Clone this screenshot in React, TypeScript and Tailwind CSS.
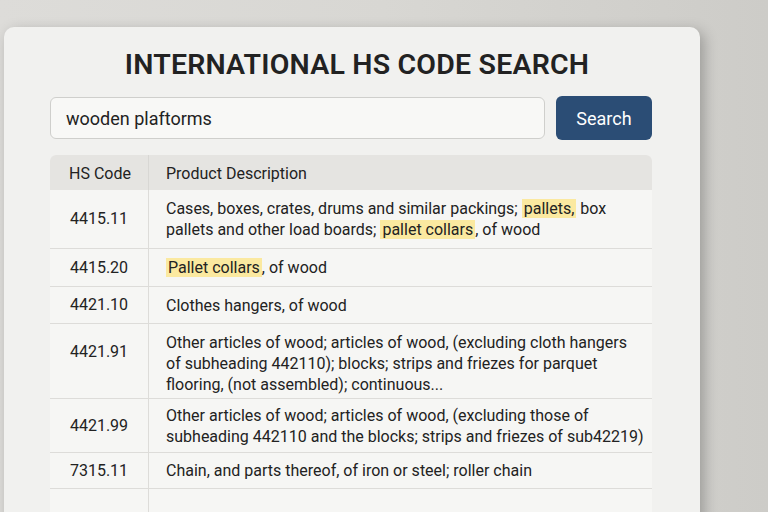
import type { ReactNode } from 'react';

type Row = { code: string; lines: ReactNode[]; h: string; codeClass?: string; descClass?: string };

function Mark({ children }: { children: ReactNode }) {
  return <span className="bg-[#fbe9a0] px-[2px]">{children}</span>;
}

const rows: Row[] = [
  {
    code: '4415.11',
    h: 'h-[59px]',
    lines: [
      <>Cases, boxes, crates, drums and similar packings; <Mark>pallets,</Mark> box</>,
      <>pallets and other load boards; <Mark>pallet collars</Mark>, of wood</>,
    ],
  },
  { code: '4415.20', h: 'h-[38px]', lines: [<><Mark>Pallet collars</Mark>, of wood</>] },
  { code: '4421.10', h: 'h-[37px]', lines: ['Clothes hangers, of wood'] },
  {
    code: '4421.91',
    h: 'h-[75px]',
    codeClass: 'pb-[18px]',
    descClass: 'pt-[5px]',
    lines: [
      'Other articles of wood; articles of wood, (excluding cloth hangers',
      'of subheading 442110); blocks; strips and friezes for parquet',
      'flooring, (not assembled); continuous...',
    ],
  },
  {
    code: '4421.99',
    h: 'h-[54px]',
    lines: [
      'Other articles of wood; articles of wood, (excluding those of',
      'subheading 442110 and the blocks; strips and friezes of sub42219)',
    ],
  },
  { code: '7315.11', h: 'h-[36px]', lines: ['Chain, and parts thereof, of iron or steel; roller chain'] },
];

export default function App() {
  return (
    <div
      className="h-[512px] w-full overflow-hidden bg-gradient-to-r from-[#dddcd9] via-[#d8d7d3] to-[#cdccc8] pt-[27px] pl-[4px] text-[#222]"
      style={{ fontFamily: 'Roboto, "Liberation Sans", sans-serif' }}
    >
      <div className="h-[520px] w-[696px] rounded-[10px] bg-[#f1f1ef] px-[46px] pt-[20px] shadow-[4px_4px_14px_rgba(0,0,0,0.25)]">
        <h1 className="pl-[10px] text-center text-[28.5px] leading-[36px] font-semibold tracking-[0.2px] text-[#222]">
          INTERNATIONAL HS CODE SEARCH
        </h1>

        {/* search bar */}
        <div className="mt-[14px] flex gap-[11px]">
          <div className="flex h-[42px] w-[495px] items-center rounded-[6px] border border-[#cfcfcc] bg-[#f8f8f6] px-[15px] text-[18px]">
            wooden plaftorms
          </div>
          <button className="mt-[-1px] h-[44px] w-[96px] rounded-[6px] bg-[#2b4d75] text-[18px] text-white">
            Search
          </button>
        </div>

        {/* results */}
        <div className="mt-[15px] w-[602px] overflow-hidden rounded-t-[6px] bg-[#f6f6f4] text-[16px]">
          <div className="flex h-[35px] items-center bg-[#e5e4e1]">
            <div className="flex h-full w-[99px] items-center justify-center border-r border-[#d8d7d4] pt-[3px] pl-[2px]">
              HS Code
            </div>
            <div className="pt-[3px] pl-[17px]">Product Description</div>
          </div>
          {rows.map((r) => (
            <div key={r.code} className={`flex ${r.h} border-b border-[#dddcd9]`}>
              <div
                className={`flex w-[99px] shrink-0 items-center justify-center border-r border-[#dddcd9] ${r.codeClass ?? ''}`}
              >
                {r.code}
              </div>
              <div
                className={`flex flex-col justify-center pl-[17px] leading-[21px] whitespace-nowrap ${r.descClass ?? ''}`}
              >
                {r.lines.map((l, i) => (
                  <div key={i}>{l}</div>
                ))}
              </div>
            </div>
          ))}
          <div className="flex h-[60px]">
            <div className="w-[99px] border-r border-[#dddcd9]" />
          </div>
        </div>
      </div>
    </div>
  );
}
